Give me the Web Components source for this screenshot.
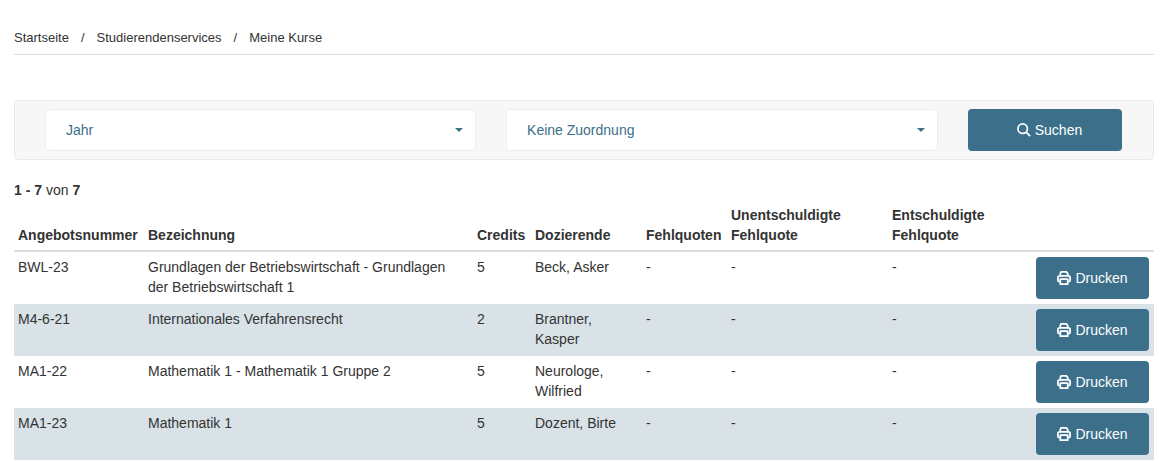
<!DOCTYPE html>
<html lang="de">
<head>
<meta charset="utf-8">
<title>Meine Kurse</title>
<style>
  html, body { margin: 0; background: #fff; overflow: hidden; }
  body { font: 14px/20px "Liberation Sans", Arial, sans-serif; color: #333; }
  page-shell { --cols: 130px 329px 58px 111px 85px 161px 140px 1fr; --brand: #3c6f8a; }
</style>
</head>
<body>
<page-shell>
  <bread-crumbs>
    <span>Startseite</span><span>Studierendenservices</span><span>Meine Kurse</span>
  </bread-crumbs>
  <search-panel>
    <select-box label="Jahr" style="flex:431"></select-box>
    <select-box label="Keine Zuordnung" style="flex:432"></select-box>
    <action-button slot="action" icon="search" wide>Suchen</action-button>
  </search-panel>
  <result-count from="1" to="7" total="7"></result-count>
  <course-table>
    <course-row nr="BWL-23" name="Grundlagen der Betriebswirtschaft - Grundlagen der Betriebswirtschaft 1" credits="5" teacher="Beck, Asker"></course-row>
    <course-row nr="M4-6-21" name="Internationales Verfahrensrecht" credits="2" teacher="Brantner, Kasper" shaded></course-row>
    <course-row nr="MA1-22" name="Mathematik 1 - Mathematik 1 Gruppe 2" credits="5" teacher="Neurologe, Wilfried"></course-row>
    <course-row nr="MA1-23" name="Mathematik 1" credits="5" teacher="Dozent, Birte" shaded></course-row>
  </course-table>
</page-shell>

<script>
const ICONS = {
  search: '<circle cx="6.5" cy="6.5" r="5.4"/><path d="M10.4 10.4 15 15"/>',
  print: '<path d="M3.8 6V2.8A1.8 1.8 0 0 1 5.6 1h5l1.6 1.6V6"/><path d="M3.6 12H2.4A1.4 1.4 0 0 1 1 10.6V7.6A2 2 0 0 1 3 5.6h10a2 2 0 0 1 2 2v3a1.4 1.4 0 0 1-1.4 1.4h-1.2"/><path d="M3.8 9.4h8.4V15H3.8z"/>'
};

class PageShell extends HTMLElement {
  constructor() {
    super();
    this.attachShadow({ mode: 'open' }).innerHTML = `
      <style>:host { display: block; padding: 0 6px 0 14px; }</style>
      <slot></slot>`;
  }
}

class BreadCrumbs extends HTMLElement {
  constructor() {
    super();
    this.attachShadow({ mode: 'open' });
  }
  connectedCallback() {
    const parts = [...this.querySelectorAll('span')].map(s => s.textContent);
    this.shadowRoot.innerHTML = `
      <style>
        :host { display: block; height: 54px; border-bottom: 1px solid #ddd; margin-bottom: 45px; font-size: 13px; color: #333; }
        nav { display: flex; padding-top: 27.5px; line-height: 20px; }
        i { font-style: normal; padding: 0 12px; }
      </style>
      <nav>${parts.join('<i>/</i>')}</nav>`;
  }
}

class SearchPanel extends HTMLElement {
  constructor() {
    super();
    this.attachShadow({ mode: 'open' }).innerHTML = `
      <style>
        :host { display: flex; gap: 30px; height: 42px; padding: 8px 31px 8px 30px; background: #f7f7f7; border: 1px solid #e9e9e9; border-radius: 4px; }
      </style>
      <slot></slot><slot name="action"></slot>`;
  }
}

class SelectBox extends HTMLElement {
  constructor() {
    super();
    this.attachShadow({ mode: 'open' });
  }
  connectedCallback() {
    this.shadowRoot.innerHTML = `
      <style>
        :host { display: flex; align-items: center; justify-content: space-between; box-sizing: border-box; padding: 0 12px 0 20px; background: #fff; border: 1px solid #eee; border-radius: 4px; color: #3c6f8a; }
        b { width: 0; height: 0; border: 4px solid transparent; border-top: 4px solid #3c6f8a; border-bottom: 0; }
      </style>
      <span>${this.getAttribute('label')}</span><b></b>`;
  }
}

class ActionButton extends HTMLElement {
  constructor() {
    super();
    this.attachShadow({ mode: 'open' });
  }
  connectedCallback() {
    const icon = ICONS[this.getAttribute('icon')];
    this.shadowRoot.innerHTML = `
      <style>
        :host { display: flex; align-items: center; justify-content: center; gap: 4px; box-sizing: border-box; width: 113px; height: 42px; background: var(--brand); color: #fff; border-radius: 4px; }
        :host([wide]) { width: 154px; padding-left: 9px; }
        svg { width: 14px; height: 14px; fill: none; stroke: currentColor; stroke-width: 2; }
      </style>
      <svg viewBox="0 0 16 16">${icon}</svg><slot></slot>`;
  }
}

class ResultCount extends HTMLElement {
  constructor() {
    super();
    this.attachShadow({ mode: 'open' });
  }
  connectedCallback() {
    const a = n => this.getAttribute(n);
    this.shadowRoot.innerHTML = `
      <style>:host { display: block; margin-top: 20px; height: 20px; }</style>
      <b>${a('from')} - ${a('to')}</b> von <b>${a('total')}</b>`;
  }
}

class CourseTable extends HTMLElement {
  constructor() {
    super();
    this.attachShadow({ mode: 'open' }).innerHTML = `
      <style>
        :host { display: block; }
        header { display: grid; grid-template-columns: var(--cols); align-items: end; border-bottom: 2px solid #ddd; font-weight: bold; }
        header div { padding: 5px 4px; }
      </style>
      <header>
        <div>Angebotsnummer</div><div>Bezeichnung</div><div>Credits</div><div>Dozierende</div>
        <div>Fehlquoten</div><div>Unentschuldigte Fehlquote</div><div>Entschuldigte Fehlquote</div><div></div>
      </header>
      <slot></slot>`;
  }
}

class CourseRow extends HTMLElement {
  constructor() {
    super();
    this.attachShadow({ mode: 'open' });
  }
  connectedCallback() {
    const a = n => this.getAttribute(n);
    this.shadowRoot.innerHTML = `
      <style>
        :host { display: grid; grid-template-columns: var(--cols); height: 52px; }
        :host([shaded]) { background: #d8e2e7; }
        div { padding: 5px 4px; }
        .act { display: flex; justify-content: flex-end; padding: 5px; }
      </style>
      <div>${a('nr')}</div><div>${a('name')}</div><div>${a('credits')}</div><div>${a('teacher')}</div>
      <div>-</div><div>-</div><div>-</div>
      <div class="act"><action-button icon="print">Drucken</action-button></div>`;
  }
}

customElements.define('page-shell', PageShell);
customElements.define('bread-crumbs', BreadCrumbs);
customElements.define('search-panel', SearchPanel);
customElements.define('select-box', SelectBox);
customElements.define('action-button', ActionButton);
customElements.define('result-count', ResultCount);
customElements.define('course-table', CourseTable);
customElements.define('course-row', CourseRow);
</script>
</body>
</html>
